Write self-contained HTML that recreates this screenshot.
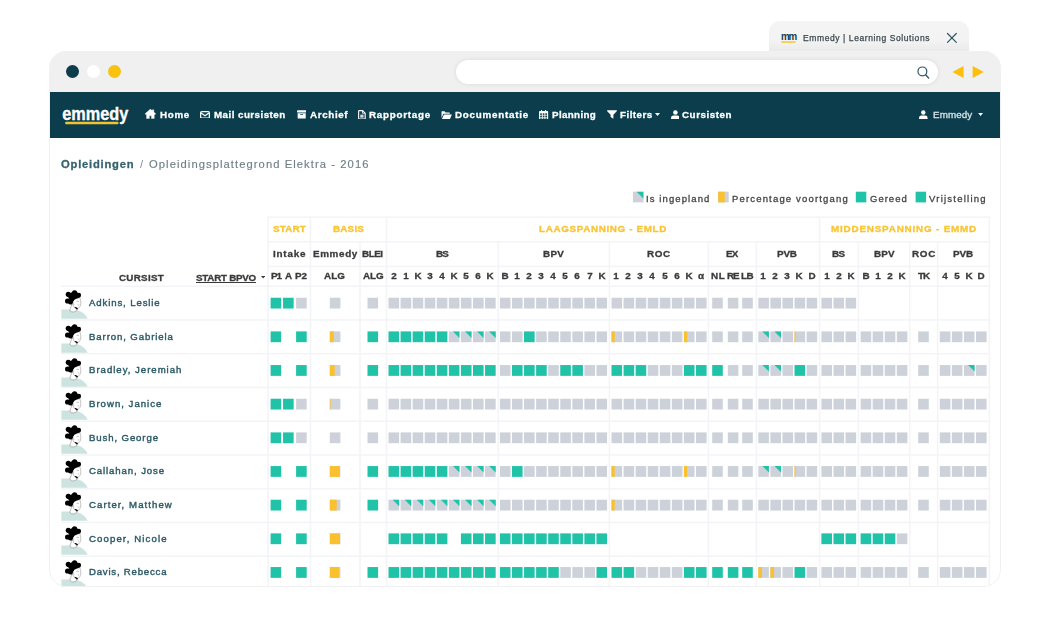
<!DOCTYPE html>
<html><head><meta charset="utf-8"><title>Emmedy | Learning Solutions</title>
<style>
html,body{margin:0;padding:0;background:#fff;}
body{width:1050px;height:638px;position:relative;overflow:hidden;font-family:'Liberation Sans', sans-serif;}
.a{position:absolute;}
.t{will-change:transform;position:absolute;white-space:pre;line-height:20px;height:20px;}
.c{position:absolute;width:10.8px;height:10.8px;background:#cdd2da;}
.G{background:#20c2a8;}
.P{background:linear-gradient(to bottom left,#20c2a8 31.3%,#cdd2da 31.8%);}
.vl{position:absolute;width:2px;background:#f3f4f7;}
.hl{position:absolute;height:2px;background:#f3f4f7;}

</style></head><body>
<div class="a" style="left:769px;top:20.7px;width:200px;height:32px;background:linear-gradient(#f4f4f4 0%,#f3f3f3 62%,#e9e9e9 97%);border-radius:11px 11px 0 0"></div>
<svg class="a" style="left:780px;top:31px" width="18" height="14" viewBox="0 0 18 14"><text x="1" y="9.2" font-family="Liberation Sans, sans-serif" font-weight="700" font-size="10" letter-spacing="-1.2" fill="#173f4c" textLength="15" lengthAdjust="spacingAndGlyphs">mm</text><rect x="1.4" y="10.3" width="14.2" height="1.5" fill="#f6c62c"/></svg>
<svg class="a" style="left:946px;top:32px" width="12" height="12" viewBox="0 0 12 12"><path d="M1.5 1.5 L10.3 10.3 M10.3 1.5 L1.5 10.3" stroke="#2f5461" stroke-width="1.2" stroke-linecap="round"/></svg>
<span class="t" style="left:803.3px;top:28.15px;font-size:8.5px;font-weight:400;color:#3a474d;letter-spacing:0.600px;-webkit-text-stroke:0.25px currentColor;">Emmedy | Learning Solutions</span>
<div class="a" id="frame" style="left:49.0px;top:51.0px;width:951.9px;height:535.5px;background:#fff;border-radius:17px 17px 17px 17px;overflow:hidden">
<div class="a" id="page" style="left:-49.0px;top:-51.0px;width:1050px;height:638px">
<div class="a" style="left:0;top:0;width:1050px;height:93.7px;background:#f0f0f0"></div>
<div class="a" style="left:0;top:91.7px;width:1050px;height:46.7px;background:#0b3d4c"></div>
<div class="a" style="left:66.1px;top:65.3px;width:13px;height:13px;border-radius:50%;background:#0b3d4c"></div>
<div class="a" style="left:86.8px;top:65.3px;width:13px;height:13px;border-radius:50%;background:#ffffff"></div>
<div class="a" style="left:107.5px;top:65.3px;width:13px;height:13px;border-radius:50%;background:#f9c20f"></div>
<div class="a" style="left:456px;top:59.8px;width:482px;height:24px;border-radius:12px;background:#fff;box-shadow:0 0 4px rgba(0,0,0,.10)"></div>
<svg class="a" style="left:915px;top:64px" width="16" height="16" viewBox="0 0 16 16"><circle cx="7.4" cy="7.4" r="4.4" fill="none" stroke="#2f5461" stroke-width="1.2"/><path d="M10.6 10.8 L13.6 14" stroke="#2f5461" stroke-width="1.3" stroke-linecap="round"/></svg>
<svg class="a" style="left:950px;top:64px" width="40" height="16" viewBox="0 0 40 16"><path d="M2.4 8 L13.6 2 L13.6 14 Z" fill="#fbbf0c"/><path d="M33.8 8 L22.6 2 L22.6 14 Z" fill="#fbbf0c"/></svg>
<svg class="a" style="left:60px;top:100px" width="72" height="28" viewBox="0 0 72 28"><text x="2.3" y="20" font-family="Liberation Sans, sans-serif" font-weight="700" font-size="18.5" fill="#fff" stroke="#fff" stroke-width=".35" textLength="66" lengthAdjust="spacingAndGlyphs">emmedy</text><rect x="5.1" y="21.7" width="53.4" height="2.6" rx="1" fill="#f3c22f"/></svg>
<svg class="a" style="left:145.4px;top:109.4px" width="10.8" height="9.7" viewBox="0 0 20 18"><path d="M10 0.2 L0 9 L1.6 10.8 L2.8 9.8 V17.8 H8.2 V12.4 H11.8 V17.8 H17.2 V9.8 L18.4 10.8 L20 9 L16.4 5.8 V1.4 H13.6 V3.4 Z" fill="#ffffff" stroke="#ffffff" stroke-width=".6" stroke-linejoin="round"/></svg>
<svg class="a" style="left:200.4px;top:110.5px" width="10.0" height="7.8" viewBox="0 0 20 15.6"><rect x="1.3" y="1.3" width="17.4" height="13" rx="2.4" fill="none" stroke="#ffffff" stroke-width="2.5"/><path d="M2.4 4 L10 9.6 L17.6 4" fill="none" stroke="#ffffff" stroke-width="2.3"/></svg>
<svg class="a" style="left:296.8px;top:110.2px" width="9.4" height="8.8" viewBox="0 0 20 18"><rect x="0" y="0" width="20" height="5" rx="1" fill="#ffffff"/><path d="M1.4 6.4 H18.6 V17 Q18.6 18 17.6 18 H2.4 Q1.4 18 1.4 17 Z M7 8.6 V10.4 H13 V8.6 Z" fill="#ffffff" fill-rule="evenodd"/></svg>
<svg class="a" style="left:358.0px;top:109.8px" width="7.8" height="9.6" viewBox="0 0 16 20"><path d="M2.4 1.2 H9.4 L14.8 6.6 V17.6 Q14.8 18.8 13.6 18.8 H2.4 Q1.2 18.8 1.2 17.6 V2.4 Q1.2 1.2 2.4 1.2 Z" fill="none" stroke="#ffffff" stroke-width="2.3"/><path d="M9.2 1.4 V6.8 H14.6" fill="none" stroke="#ffffff" stroke-width="1.6"/><rect x="4.6" y="9.6" width="6.8" height="6.4" fill="#ffffff" opacity=".8"/></svg>
<svg class="a" style="left:440.6px;top:110.6px" width="11.2" height="8.8" viewBox="0 0 22 17"><path d="M1.5 0.5 H7 L9 2.6 H16 Q17.4 2.6 17.4 4 V5.4 H5.6 Q4.6 5.4 4.2 6.4 L1 13.6 V1 Z" fill="#ffffff"/><path d="M5.8 6.8 H21.4 L17.6 15.6 Q17.2 16.5 16.2 16.5 H1.4 Z" fill="#ffffff"/></svg>
<svg class="a" style="left:539.4px;top:109.8px" width="9.2" height="9.6" viewBox="0 0 18 19"><path d="M4 0 H6 V2 H12 V0 H14 V2 H16.4 Q18 2 18 3.6 V17.4 Q18 19 16.4 19 H1.6 Q0 19 0 17.4 V3.6 Q0 2 1.6 2 H4 Z" fill="#ffffff"/><g fill="#0b3d4c"><rect x="2.2" y="6.6" width="3.4" height="3"/><rect x="7.3" y="6.6" width="3.4" height="3"/><rect x="12.4" y="6.6" width="3.4" height="3"/><rect x="2.2" y="11" width="3.4" height="3"/><rect x="7.3" y="11" width="3.4" height="3"/><rect x="12.4" y="11" width="3.4" height="3"/><rect x="2.2" y="15.2" width="3.4" height="2"/><rect x="7.3" y="15.2" width="3.4" height="2"/><rect x="12.4" y="15.2" width="3.4" height="2"/></g></svg>
<svg class="a" style="left:606.6px;top:110px" width="10" height="8.9" viewBox="0 0 20 18"><path d="M0.6 0.5 H19.4 Q20.4 1.2 19.6 2.4 L12.8 9.6 V17.6 L7.2 14.4 V9.6 L0.4 2.4 Q-0.4 1.2 0.6 0.5 Z" fill="#ffffff"/></svg>
<svg class="a" style="left:654.8px;top:113.4px" width="5" height="3" viewBox="0 0 10 6"><path d="M0 0 H10 L5 6 Z" fill="#ffffff"/></svg>
<svg class="a" style="left:670.6px;top:109.8px" width="8.8" height="9.4" viewBox="0 0 18 19"><circle cx="9" cy="5" r="4.6" fill="#ffffff"/><path d="M0 19 V16.4 Q0 11.4 5 11.4 H13 Q18 11.4 18 16.4 V19 Z" fill="#ffffff"/></svg>
<svg class="a" style="left:919.4px;top:109.8px" width="8.6" height="9.2" viewBox="0 0 18 19"><circle cx="9" cy="5" r="4.6" fill="#ffffff"/><path d="M0 19 V16.4 Q0 11.4 5 11.4 H13 Q18 11.4 18 16.4 V19 Z" fill="#ffffff"/></svg>
<svg class="a" style="left:978.2px;top:113.4px" width="5.2" height="3" viewBox="0 0 10 6"><path d="M0 0 H10 L5 6 Z" fill="#ffffff"/></svg>
<svg class="a" style="left:260.6px;top:276.4px" width="4.2" height="2.6" viewBox="0 0 10 6"><path d="M0 0 H10 L5 6 Z" fill="#3a3a3a"/></svg>
<svg class="a" style="left:0;top:0" width="1050" height="638" viewBox="0 0 1050 638"><rect x="267.35" y="216.35" width="722.80" height="1.50" fill="#f3f4f7"/><rect x="267.35" y="241.05" width="722.80" height="1.50" fill="#f3f4f7"/><rect x="267.35" y="265.65" width="722.80" height="1.50" fill="#f3f4f7"/><rect x="61.00" y="285.45" width="929.15" height="1.50" fill="#f3f4f7"/><rect x="61.00" y="319.20" width="929.15" height="1.50" fill="#f3f4f7"/><rect x="61.00" y="352.95" width="929.15" height="1.50" fill="#f3f4f7"/><rect x="61.00" y="386.70" width="929.15" height="1.50" fill="#f3f4f7"/><rect x="61.00" y="420.45" width="929.15" height="1.50" fill="#f3f4f7"/><rect x="61.00" y="454.20" width="929.15" height="1.50" fill="#f3f4f7"/><rect x="61.00" y="487.95" width="929.15" height="1.50" fill="#f3f4f7"/><rect x="61.00" y="521.70" width="929.15" height="1.50" fill="#f3f4f7"/><rect x="61.00" y="555.45" width="929.15" height="1.50" fill="#f3f4f7"/><rect x="267.35" y="217.10" width="1.50" height="369.40" fill="#f3f4f7"/><rect x="309.75" y="217.10" width="1.50" height="369.40" fill="#f3f4f7"/><rect x="359.25" y="241.80" width="1.50" height="344.70" fill="#f3f4f7"/><rect x="385.75" y="217.10" width="1.50" height="369.40" fill="#f3f4f7"/><rect x="497.45" y="241.80" width="1.50" height="344.70" fill="#f3f4f7"/><rect x="608.65" y="241.80" width="1.50" height="344.70" fill="#f3f4f7"/><rect x="707.65" y="241.80" width="1.50" height="344.70" fill="#f3f4f7"/><rect x="755.65" y="241.80" width="1.50" height="344.70" fill="#f3f4f7"/><rect x="818.85" y="217.10" width="1.50" height="369.40" fill="#f3f4f7"/><rect x="857.65" y="241.80" width="1.50" height="344.70" fill="#f3f4f7"/><rect x="908.95" y="241.80" width="1.50" height="344.70" fill="#f3f4f7"/><rect x="936.85" y="241.80" width="1.50" height="344.70" fill="#f3f4f7"/><rect x="988.65" y="217.10" width="1.50" height="369.40" fill="#f3f4f7"/></svg>
<span class="t" style="left:160.0px;top:104.90px;font-size:9.8px;font-weight:700;color:#ffffff;letter-spacing:0.689px;-webkit-text-stroke:0.3px currentColor;">Home</span>
<span class="t" style="left:213.8px;top:104.90px;font-size:9.8px;font-weight:700;color:#ffffff;letter-spacing:0.450px;-webkit-text-stroke:0.3px currentColor;">Mail cursisten</span>
<span class="t" style="left:309.7px;top:104.90px;font-size:9.8px;font-weight:700;color:#ffffff;letter-spacing:0.639px;-webkit-text-stroke:0.3px currentColor;">Archief</span>
<span class="t" style="left:368.6px;top:104.90px;font-size:9.8px;font-weight:700;color:#ffffff;letter-spacing:0.751px;-webkit-text-stroke:0.3px currentColor;">Rapportage</span>
<span class="t" style="left:455.2px;top:104.90px;font-size:9.8px;font-weight:700;color:#ffffff;letter-spacing:0.756px;-webkit-text-stroke:0.3px currentColor;">Documentatie</span>
<span class="t" style="left:551.8px;top:104.90px;font-size:9.8px;font-weight:700;color:#ffffff;letter-spacing:0.346px;-webkit-text-stroke:0.3px currentColor;">Planning</span>
<span class="t" style="left:619.6px;top:104.90px;font-size:9.8px;font-weight:700;color:#ffffff;letter-spacing:0.466px;-webkit-text-stroke:0.3px currentColor;">Filters</span>
<span class="t" style="left:682.2px;top:104.90px;font-size:9.8px;font-weight:700;color:#ffffff;letter-spacing:0.539px;-webkit-text-stroke:0.3px currentColor;">Cursisten</span>
<span class="t" style="left:932.6px;top:104.90px;font-size:9.8px;font-weight:400;color:#d5e2e6;letter-spacing:0.109px;-webkit-text-stroke:0.3px currentColor;">Emmedy</span>
<span class="t" style="left:60.6px;top:154.42px;font-size:11.2px;font-weight:700;color:#34626e;letter-spacing:0.796px;-webkit-text-stroke:0.3px currentColor;">Opleidingen</span>
<span class="t" style="left:139.5px;top:154.42px;font-size:11.2px;font-weight:400;color:#7b8a90;letter-spacing:0.000px;">/</span>
<span class="t" style="left:149.0px;top:154.42px;font-size:11.2px;font-weight:400;color:#6f7f86;letter-spacing:1.080px;-webkit-text-stroke:0.15px currentColor;">Opleidingsplattegrond Elektra - 2016</span>
<span class="t" style="left:646.2px;top:189.01px;font-size:9.5px;font-weight:400;color:#444444;letter-spacing:1.097px;-webkit-text-stroke:0.3px currentColor;">Is ingepland</span>
<span class="t" style="left:731.9px;top:189.01px;font-size:9.5px;font-weight:400;color:#444444;letter-spacing:1.169px;-webkit-text-stroke:0.3px currentColor;">Percentage voortgang</span>
<span class="t" style="left:869.9px;top:189.01px;font-size:9.5px;font-weight:400;color:#444444;letter-spacing:1.003px;-webkit-text-stroke:0.3px currentColor;">Gereed</span>
<span class="t" style="left:929.0px;top:189.01px;font-size:9.5px;font-weight:400;color:#444444;letter-spacing:1.241px;-webkit-text-stroke:0.3px currentColor;">Vrijstelling</span>
<span class="t" style="left:272.5px;top:219.37px;font-size:9.9px;font-weight:700;color:#f7c433;letter-spacing:0.128px;-webkit-text-stroke:0.3px currentColor;">START</span>
<span class="t" style="left:332.6px;top:219.37px;font-size:9.9px;font-weight:700;color:#f7c433;letter-spacing:0.178px;-webkit-text-stroke:0.3px currentColor;">BASIS</span>
<span class="t" style="left:539.0px;top:219.37px;font-size:9.9px;font-weight:700;color:#f7c433;letter-spacing:0.621px;-webkit-text-stroke:0.3px currentColor;">LAAGSPANNING - EMLD</span>
<span class="t" style="left:831.4px;top:219.37px;font-size:9.9px;font-weight:700;color:#f7c433;letter-spacing:0.795px;-webkit-text-stroke:0.3px currentColor;">MIDDENSPANNING - EMMD</span>
<span class="t" style="left:272.9px;top:244.07px;font-size:9.9px;font-weight:700;color:#3a3a3a;letter-spacing:0.771px;-webkit-text-stroke:0.3px currentColor;">Intake</span>
<span class="t" style="left:312.7px;top:244.07px;font-size:9.9px;font-weight:700;color:#3a3a3a;letter-spacing:0.626px;-webkit-text-stroke:0.3px currentColor;">Emmedy</span>
<span class="t" style="left:362.3px;top:244.07px;font-size:9.9px;font-weight:700;color:#3a3a3a;letter-spacing:-0.500px;-webkit-text-stroke:0.3px currentColor;">BLEI</span>
<span class="t" style="left:435.8px;top:244.07px;font-size:9.9px;font-weight:700;color:#3a3a3a;letter-spacing:-0.819px;-webkit-text-stroke:0.3px currentColor;">BS</span>
<span class="t" style="left:542.7px;top:244.07px;font-size:9.9px;font-weight:700;color:#3a3a3a;letter-spacing:0.244px;-webkit-text-stroke:0.3px currentColor;">BPV</span>
<span class="t" style="left:646.8px;top:244.07px;font-size:9.9px;font-weight:700;color:#3a3a3a;letter-spacing:0.623px;-webkit-text-stroke:0.3px currentColor;">ROC</span>
<span class="t" style="left:725.6px;top:244.07px;font-size:9.9px;font-weight:700;color:#3a3a3a;letter-spacing:-0.788px;-webkit-text-stroke:0.3px currentColor;">EX</span>
<span class="t" style="left:777.4px;top:244.07px;font-size:9.9px;font-weight:700;color:#3a3a3a;letter-spacing:-0.156px;-webkit-text-stroke:0.3px currentColor;">PVB</span>
<span class="t" style="left:832.3px;top:244.07px;font-size:9.9px;font-weight:700;color:#3a3a3a;letter-spacing:-0.719px;-webkit-text-stroke:0.3px currentColor;">BS</span>
<span class="t" style="left:873.6px;top:244.07px;font-size:9.9px;font-weight:700;color:#3a3a3a;letter-spacing:0.194px;-webkit-text-stroke:0.3px currentColor;">BPV</span>
<span class="t" style="left:912.0px;top:244.07px;font-size:9.9px;font-weight:700;color:#3a3a3a;letter-spacing:0.673px;-webkit-text-stroke:0.3px currentColor;">ROC</span>
<span class="t" style="left:953.3px;top:244.07px;font-size:9.9px;font-weight:700;color:#3a3a3a;letter-spacing:-0.106px;-webkit-text-stroke:0.3px currentColor;">PVB</span>
<span class="t" style="left:118.9px;top:268.00px;font-size:9.8px;font-weight:700;color:#3a3a3a;letter-spacing:0.297px;-webkit-text-stroke:0.3px currentColor;">CURSIST</span>
<span class="t" style="left:196.4px;top:268.00px;font-size:9.8px;font-weight:700;color:#3a3a3a;letter-spacing:-0.247px;text-decoration:underline;text-underline-offset:1px;-webkit-text-stroke:0.3px currentColor;">START BPVO</span>
<span class="t" style="left:270.7px;top:266.17px;font-size:9.9px;font-weight:700;color:#3a3a3a;letter-spacing:-1.094px;-webkit-text-stroke:0.3px currentColor;">P1</span>
<span class="t" style="left:284.6px;top:266.17px;font-size:9.9px;font-weight:700;color:#3a3a3a;letter-spacing:0.000px;-webkit-text-stroke:0.3px currentColor;">A</span>
<span class="t" style="left:295.4px;top:266.17px;font-size:9.9px;font-weight:700;color:#3a3a3a;letter-spacing:-0.194px;-webkit-text-stroke:0.3px currentColor;">P2</span>
<span class="t" style="left:324.3px;top:266.17px;font-size:9.9px;font-weight:700;color:#3a3a3a;letter-spacing:0.070px;-webkit-text-stroke:0.3px currentColor;">ALG</span>
<span class="t" style="left:362.6px;top:266.17px;font-size:9.9px;font-weight:700;color:#3a3a3a;letter-spacing:-0.130px;-webkit-text-stroke:0.3px currentColor;">ALG</span>
<span class="t" style="left:710.8px;top:266.17px;font-size:9.9px;font-weight:700;color:#3a3a3a;letter-spacing:0.628px;-webkit-text-stroke:0.3px currentColor;">NL</span>
<span class="t" style="left:727.2px;top:266.17px;font-size:9.9px;font-weight:700;color:#3a3a3a;letter-spacing:-1.119px;-webkit-text-stroke:0.3px currentColor;">RE</span>
<span class="t" style="left:741.4px;top:266.17px;font-size:9.9px;font-weight:700;color:#3a3a3a;letter-spacing:-0.572px;-webkit-text-stroke:0.3px currentColor;">LB</span>
<span class="t" style="left:917.6px;top:266.17px;font-size:9.9px;font-weight:700;color:#3a3a3a;letter-spacing:-1.072px;-webkit-text-stroke:0.3px currentColor;">TK</span>
<span class="t" style="left:88.9px;top:293.07px;font-size:9.6px;font-weight:400;color:#2b5a67;letter-spacing:0.884px;-webkit-text-stroke:0.4px currentColor;">Adkins, Leslie</span>
<span class="t" style="left:88.9px;top:326.73px;font-size:9.6px;font-weight:400;color:#2b5a67;letter-spacing:0.901px;-webkit-text-stroke:0.4px currentColor;">Barron, Gabriela</span>
<span class="t" style="left:88.9px;top:360.39px;font-size:9.6px;font-weight:400;color:#2b5a67;letter-spacing:0.987px;-webkit-text-stroke:0.4px currentColor;">Bradley, Jeremiah</span>
<span class="t" style="left:88.9px;top:394.05px;font-size:9.6px;font-weight:400;color:#2b5a67;letter-spacing:1.011px;-webkit-text-stroke:0.4px currentColor;">Brown, Janice</span>
<span class="t" style="left:88.9px;top:427.71px;font-size:9.6px;font-weight:400;color:#2b5a67;letter-spacing:0.891px;-webkit-text-stroke:0.4px currentColor;">Bush, George</span>
<span class="t" style="left:88.9px;top:461.37px;font-size:9.6px;font-weight:400;color:#2b5a67;letter-spacing:0.895px;-webkit-text-stroke:0.4px currentColor;">Callahan, Jose</span>
<span class="t" style="left:88.9px;top:495.03px;font-size:9.6px;font-weight:400;color:#2b5a67;letter-spacing:1.077px;-webkit-text-stroke:0.4px currentColor;">Carter, Matthew</span>
<span class="t" style="left:88.9px;top:528.69px;font-size:9.6px;font-weight:400;color:#2b5a67;letter-spacing:1.120px;-webkit-text-stroke:0.4px currentColor;">Cooper, Nicole</span>
<span class="t" style="left:88.9px;top:562.35px;font-size:9.6px;font-weight:400;color:#2b5a67;letter-spacing:0.793px;-webkit-text-stroke:0.4px currentColor;">Davis, Rebecca</span>
<span class="t" style="left:383.8px;top:266.17px;width:20px;text-align:center;font-size:9.9px;font-weight:700;-webkit-text-stroke:0.3px currentColor;color:#3a3a3a">2</span>
<span class="t" style="left:395.9px;top:266.17px;width:20px;text-align:center;font-size:9.9px;font-weight:700;-webkit-text-stroke:0.3px currentColor;color:#3a3a3a">1</span>
<span class="t" style="left:407.9px;top:266.17px;width:20px;text-align:center;font-size:9.9px;font-weight:700;-webkit-text-stroke:0.3px currentColor;color:#3a3a3a">K</span>
<span class="t" style="left:420.0px;top:266.17px;width:20px;text-align:center;font-size:9.9px;font-weight:700;-webkit-text-stroke:0.3px currentColor;color:#3a3a3a">3</span>
<span class="t" style="left:432.1px;top:266.17px;width:20px;text-align:center;font-size:9.9px;font-weight:700;-webkit-text-stroke:0.3px currentColor;color:#3a3a3a">4</span>
<span class="t" style="left:444.2px;top:266.17px;width:20px;text-align:center;font-size:9.9px;font-weight:700;-webkit-text-stroke:0.3px currentColor;color:#3a3a3a">K</span>
<span class="t" style="left:456.2px;top:266.17px;width:20px;text-align:center;font-size:9.9px;font-weight:700;-webkit-text-stroke:0.3px currentColor;color:#3a3a3a">5</span>
<span class="t" style="left:468.3px;top:266.17px;width:20px;text-align:center;font-size:9.9px;font-weight:700;-webkit-text-stroke:0.3px currentColor;color:#3a3a3a">6</span>
<span class="t" style="left:480.4px;top:266.17px;width:20px;text-align:center;font-size:9.9px;font-weight:700;-webkit-text-stroke:0.3px currentColor;color:#3a3a3a">K</span>
<span class="t" style="left:495.0px;top:266.17px;width:20px;text-align:center;font-size:9.9px;font-weight:700;-webkit-text-stroke:0.3px currentColor;color:#3a3a3a">B</span>
<span class="t" style="left:507.1px;top:266.17px;width:20px;text-align:center;font-size:9.9px;font-weight:700;-webkit-text-stroke:0.3px currentColor;color:#3a3a3a">1</span>
<span class="t" style="left:519.1px;top:266.17px;width:20px;text-align:center;font-size:9.9px;font-weight:700;-webkit-text-stroke:0.3px currentColor;color:#3a3a3a">2</span>
<span class="t" style="left:531.2px;top:266.17px;width:20px;text-align:center;font-size:9.9px;font-weight:700;-webkit-text-stroke:0.3px currentColor;color:#3a3a3a">3</span>
<span class="t" style="left:543.3px;top:266.17px;width:20px;text-align:center;font-size:9.9px;font-weight:700;-webkit-text-stroke:0.3px currentColor;color:#3a3a3a">4</span>
<span class="t" style="left:555.4px;top:266.17px;width:20px;text-align:center;font-size:9.9px;font-weight:700;-webkit-text-stroke:0.3px currentColor;color:#3a3a3a">5</span>
<span class="t" style="left:567.4px;top:266.17px;width:20px;text-align:center;font-size:9.9px;font-weight:700;-webkit-text-stroke:0.3px currentColor;color:#3a3a3a">6</span>
<span class="t" style="left:579.5px;top:266.17px;width:20px;text-align:center;font-size:9.9px;font-weight:700;-webkit-text-stroke:0.3px currentColor;color:#3a3a3a">7</span>
<span class="t" style="left:591.6px;top:266.17px;width:20px;text-align:center;font-size:9.9px;font-weight:700;-webkit-text-stroke:0.3px currentColor;color:#3a3a3a">K</span>
<span class="t" style="left:606.2px;top:266.17px;width:20px;text-align:center;font-size:9.9px;font-weight:700;-webkit-text-stroke:0.3px currentColor;color:#3a3a3a">1</span>
<span class="t" style="left:618.3px;top:266.17px;width:20px;text-align:center;font-size:9.9px;font-weight:700;-webkit-text-stroke:0.3px currentColor;color:#3a3a3a">2</span>
<span class="t" style="left:630.3px;top:266.17px;width:20px;text-align:center;font-size:9.9px;font-weight:700;-webkit-text-stroke:0.3px currentColor;color:#3a3a3a">3</span>
<span class="t" style="left:642.4px;top:266.17px;width:20px;text-align:center;font-size:9.9px;font-weight:700;-webkit-text-stroke:0.3px currentColor;color:#3a3a3a">4</span>
<span class="t" style="left:654.5px;top:266.17px;width:20px;text-align:center;font-size:9.9px;font-weight:700;-webkit-text-stroke:0.3px currentColor;color:#3a3a3a">5</span>
<span class="t" style="left:666.6px;top:266.17px;width:20px;text-align:center;font-size:9.9px;font-weight:700;-webkit-text-stroke:0.3px currentColor;color:#3a3a3a">6</span>
<span class="t" style="left:678.6px;top:266.17px;width:20px;text-align:center;font-size:9.9px;font-weight:700;-webkit-text-stroke:0.3px currentColor;color:#3a3a3a">K</span>
<span class="t" style="left:690.7px;top:266.17px;width:20px;text-align:center;font-size:9.9px;font-weight:700;-webkit-text-stroke:0.3px currentColor;color:#3a3a3a">α</span>
<span class="t" style="left:753.2px;top:266.17px;width:20px;text-align:center;font-size:9.9px;font-weight:700;-webkit-text-stroke:0.3px currentColor;color:#3a3a3a">1</span>
<span class="t" style="left:765.3px;top:266.17px;width:20px;text-align:center;font-size:9.9px;font-weight:700;-webkit-text-stroke:0.3px currentColor;color:#3a3a3a">2</span>
<span class="t" style="left:777.3px;top:266.17px;width:20px;text-align:center;font-size:9.9px;font-weight:700;-webkit-text-stroke:0.3px currentColor;color:#3a3a3a">3</span>
<span class="t" style="left:789.4px;top:266.17px;width:20px;text-align:center;font-size:9.9px;font-weight:700;-webkit-text-stroke:0.3px currentColor;color:#3a3a3a">K</span>
<span class="t" style="left:801.5px;top:266.17px;width:20px;text-align:center;font-size:9.9px;font-weight:700;-webkit-text-stroke:0.3px currentColor;color:#3a3a3a">D</span>
<span class="t" style="left:816.5px;top:266.17px;width:20px;text-align:center;font-size:9.9px;font-weight:700;-webkit-text-stroke:0.3px currentColor;color:#3a3a3a">1</span>
<span class="t" style="left:828.6px;top:266.17px;width:20px;text-align:center;font-size:9.9px;font-weight:700;-webkit-text-stroke:0.3px currentColor;color:#3a3a3a">2</span>
<span class="t" style="left:840.6px;top:266.17px;width:20px;text-align:center;font-size:9.9px;font-weight:700;-webkit-text-stroke:0.3px currentColor;color:#3a3a3a">K</span>
<span class="t" style="left:855.9px;top:266.17px;width:20px;text-align:center;font-size:9.9px;font-weight:700;-webkit-text-stroke:0.3px currentColor;color:#3a3a3a">B</span>
<span class="t" style="left:868.0px;top:266.17px;width:20px;text-align:center;font-size:9.9px;font-weight:700;-webkit-text-stroke:0.3px currentColor;color:#3a3a3a">1</span>
<span class="t" style="left:880.0px;top:266.17px;width:20px;text-align:center;font-size:9.9px;font-weight:700;-webkit-text-stroke:0.3px currentColor;color:#3a3a3a">2</span>
<span class="t" style="left:892.1px;top:266.17px;width:20px;text-align:center;font-size:9.9px;font-weight:700;-webkit-text-stroke:0.3px currentColor;color:#3a3a3a">K</span>
<span class="t" style="left:935.1px;top:266.17px;width:20px;text-align:center;font-size:9.9px;font-weight:700;-webkit-text-stroke:0.3px currentColor;color:#3a3a3a">4</span>
<span class="t" style="left:947.2px;top:266.17px;width:20px;text-align:center;font-size:9.9px;font-weight:700;-webkit-text-stroke:0.3px currentColor;color:#3a3a3a">5</span>
<span class="t" style="left:959.2px;top:266.17px;width:20px;text-align:center;font-size:9.9px;font-weight:700;-webkit-text-stroke:0.3px currentColor;color:#3a3a3a">K</span>
<span class="t" style="left:971.3px;top:266.17px;width:20px;text-align:center;font-size:9.9px;font-weight:700;-webkit-text-stroke:0.3px currentColor;color:#3a3a3a">D</span>
<svg class="a" style="left:61px;top:290.30px" width="28" height="30" viewBox="0 0 28 30"><path d="M0.4 19.4 H10 L17 20.6 Q23 22 26.7 28.7 H0.4 Z" fill="#cde3df"/><path d="M11.2 13.6 L9 19.4 Q8.6 21.2 10.6 21.8 Q13 22.4 15.4 21 L17 17.6 Z" fill="#fff" stroke="#444" stroke-width=".35"/><path d="M13 9.4 L18.8 7.6 Q20.2 11.4 19.8 14 Q19.4 16.6 17.4 18.2 Q15.2 18.8 13.2 17.2 Q11 14.6 11.4 11.6 Z" fill="#fff" stroke="#555" stroke-width=".35"/><path d="M13.4 17.2 L16 19.8 L17 18.6 L15 17 Z" fill="#111"/><path d="M15.6 11.6 q1.1 -.7 2.2 0 M16.8 14.8 q.7 .4 1.4 0 M12.6 12.4 q-.9 1.2 .3 2.4" stroke="#555" stroke-width=".4" fill="none"/><g fill="#000"><circle cx="7.3" cy="4.3" r="2.6"/><circle cx="13.6" cy="2.9" r="2.6"/><circle cx="17.9" cy="4.9" r="2.1"/><circle cx="6.6" cy="11" r="2.6"/><circle cx="9.4" cy="12.3" r="2.2"/><path d="M5.4 5.6 L8.4 8.6 L5 9.6 L8 13.6 L10.6 14.6 L12 12 L13.6 9.6 L16.4 8.2 L19.4 7.2 L19.8 5 L16.4 2.6 L13 1 L9.4 3 Z"/></g></svg>
<svg class="a" style="left:61px;top:323.95px" width="28" height="30" viewBox="0 0 28 30"><path d="M0.4 19.4 H10 L17 20.6 Q23 22 26.7 28.7 H0.4 Z" fill="#cde3df"/><path d="M11.2 13.6 L9 19.4 Q8.6 21.2 10.6 21.8 Q13 22.4 15.4 21 L17 17.6 Z" fill="#fff" stroke="#444" stroke-width=".35"/><path d="M13 9.4 L18.8 7.6 Q20.2 11.4 19.8 14 Q19.4 16.6 17.4 18.2 Q15.2 18.8 13.2 17.2 Q11 14.6 11.4 11.6 Z" fill="#fff" stroke="#555" stroke-width=".35"/><path d="M13.4 17.2 L16 19.8 L17 18.6 L15 17 Z" fill="#111"/><path d="M15.6 11.6 q1.1 -.7 2.2 0 M16.8 14.8 q.7 .4 1.4 0 M12.6 12.4 q-.9 1.2 .3 2.4" stroke="#555" stroke-width=".4" fill="none"/><g fill="#000"><circle cx="7.3" cy="4.3" r="2.6"/><circle cx="13.6" cy="2.9" r="2.6"/><circle cx="17.9" cy="4.9" r="2.1"/><circle cx="6.6" cy="11" r="2.6"/><circle cx="9.4" cy="12.3" r="2.2"/><path d="M5.4 5.6 L8.4 8.6 L5 9.6 L8 13.6 L10.6 14.6 L12 12 L13.6 9.6 L16.4 8.2 L19.4 7.2 L19.8 5 L16.4 2.6 L13 1 L9.4 3 Z"/></g></svg>
<svg class="a" style="left:61px;top:357.60px" width="28" height="30" viewBox="0 0 28 30"><path d="M0.4 19.4 H10 L17 20.6 Q23 22 26.7 28.7 H0.4 Z" fill="#cde3df"/><path d="M11.2 13.6 L9 19.4 Q8.6 21.2 10.6 21.8 Q13 22.4 15.4 21 L17 17.6 Z" fill="#fff" stroke="#444" stroke-width=".35"/><path d="M13 9.4 L18.8 7.6 Q20.2 11.4 19.8 14 Q19.4 16.6 17.4 18.2 Q15.2 18.8 13.2 17.2 Q11 14.6 11.4 11.6 Z" fill="#fff" stroke="#555" stroke-width=".35"/><path d="M13.4 17.2 L16 19.8 L17 18.6 L15 17 Z" fill="#111"/><path d="M15.6 11.6 q1.1 -.7 2.2 0 M16.8 14.8 q.7 .4 1.4 0 M12.6 12.4 q-.9 1.2 .3 2.4" stroke="#555" stroke-width=".4" fill="none"/><g fill="#000"><circle cx="7.3" cy="4.3" r="2.6"/><circle cx="13.6" cy="2.9" r="2.6"/><circle cx="17.9" cy="4.9" r="2.1"/><circle cx="6.6" cy="11" r="2.6"/><circle cx="9.4" cy="12.3" r="2.2"/><path d="M5.4 5.6 L8.4 8.6 L5 9.6 L8 13.6 L10.6 14.6 L12 12 L13.6 9.6 L16.4 8.2 L19.4 7.2 L19.8 5 L16.4 2.6 L13 1 L9.4 3 Z"/></g></svg>
<svg class="a" style="left:61px;top:391.25px" width="28" height="30" viewBox="0 0 28 30"><path d="M0.4 19.4 H10 L17 20.6 Q23 22 26.7 28.7 H0.4 Z" fill="#cde3df"/><path d="M11.2 13.6 L9 19.4 Q8.6 21.2 10.6 21.8 Q13 22.4 15.4 21 L17 17.6 Z" fill="#fff" stroke="#444" stroke-width=".35"/><path d="M13 9.4 L18.8 7.6 Q20.2 11.4 19.8 14 Q19.4 16.6 17.4 18.2 Q15.2 18.8 13.2 17.2 Q11 14.6 11.4 11.6 Z" fill="#fff" stroke="#555" stroke-width=".35"/><path d="M13.4 17.2 L16 19.8 L17 18.6 L15 17 Z" fill="#111"/><path d="M15.6 11.6 q1.1 -.7 2.2 0 M16.8 14.8 q.7 .4 1.4 0 M12.6 12.4 q-.9 1.2 .3 2.4" stroke="#555" stroke-width=".4" fill="none"/><g fill="#000"><circle cx="7.3" cy="4.3" r="2.6"/><circle cx="13.6" cy="2.9" r="2.6"/><circle cx="17.9" cy="4.9" r="2.1"/><circle cx="6.6" cy="11" r="2.6"/><circle cx="9.4" cy="12.3" r="2.2"/><path d="M5.4 5.6 L8.4 8.6 L5 9.6 L8 13.6 L10.6 14.6 L12 12 L13.6 9.6 L16.4 8.2 L19.4 7.2 L19.8 5 L16.4 2.6 L13 1 L9.4 3 Z"/></g></svg>
<svg class="a" style="left:61px;top:424.90px" width="28" height="30" viewBox="0 0 28 30"><path d="M0.4 19.4 H10 L17 20.6 Q23 22 26.7 28.7 H0.4 Z" fill="#cde3df"/><path d="M11.2 13.6 L9 19.4 Q8.6 21.2 10.6 21.8 Q13 22.4 15.4 21 L17 17.6 Z" fill="#fff" stroke="#444" stroke-width=".35"/><path d="M13 9.4 L18.8 7.6 Q20.2 11.4 19.8 14 Q19.4 16.6 17.4 18.2 Q15.2 18.8 13.2 17.2 Q11 14.6 11.4 11.6 Z" fill="#fff" stroke="#555" stroke-width=".35"/><path d="M13.4 17.2 L16 19.8 L17 18.6 L15 17 Z" fill="#111"/><path d="M15.6 11.6 q1.1 -.7 2.2 0 M16.8 14.8 q.7 .4 1.4 0 M12.6 12.4 q-.9 1.2 .3 2.4" stroke="#555" stroke-width=".4" fill="none"/><g fill="#000"><circle cx="7.3" cy="4.3" r="2.6"/><circle cx="13.6" cy="2.9" r="2.6"/><circle cx="17.9" cy="4.9" r="2.1"/><circle cx="6.6" cy="11" r="2.6"/><circle cx="9.4" cy="12.3" r="2.2"/><path d="M5.4 5.6 L8.4 8.6 L5 9.6 L8 13.6 L10.6 14.6 L12 12 L13.6 9.6 L16.4 8.2 L19.4 7.2 L19.8 5 L16.4 2.6 L13 1 L9.4 3 Z"/></g></svg>
<svg class="a" style="left:61px;top:458.55px" width="28" height="30" viewBox="0 0 28 30"><path d="M0.4 19.4 H10 L17 20.6 Q23 22 26.7 28.7 H0.4 Z" fill="#cde3df"/><path d="M11.2 13.6 L9 19.4 Q8.6 21.2 10.6 21.8 Q13 22.4 15.4 21 L17 17.6 Z" fill="#fff" stroke="#444" stroke-width=".35"/><path d="M13 9.4 L18.8 7.6 Q20.2 11.4 19.8 14 Q19.4 16.6 17.4 18.2 Q15.2 18.8 13.2 17.2 Q11 14.6 11.4 11.6 Z" fill="#fff" stroke="#555" stroke-width=".35"/><path d="M13.4 17.2 L16 19.8 L17 18.6 L15 17 Z" fill="#111"/><path d="M15.6 11.6 q1.1 -.7 2.2 0 M16.8 14.8 q.7 .4 1.4 0 M12.6 12.4 q-.9 1.2 .3 2.4" stroke="#555" stroke-width=".4" fill="none"/><g fill="#000"><circle cx="7.3" cy="4.3" r="2.6"/><circle cx="13.6" cy="2.9" r="2.6"/><circle cx="17.9" cy="4.9" r="2.1"/><circle cx="6.6" cy="11" r="2.6"/><circle cx="9.4" cy="12.3" r="2.2"/><path d="M5.4 5.6 L8.4 8.6 L5 9.6 L8 13.6 L10.6 14.6 L12 12 L13.6 9.6 L16.4 8.2 L19.4 7.2 L19.8 5 L16.4 2.6 L13 1 L9.4 3 Z"/></g></svg>
<svg class="a" style="left:61px;top:492.20px" width="28" height="30" viewBox="0 0 28 30"><path d="M0.4 19.4 H10 L17 20.6 Q23 22 26.7 28.7 H0.4 Z" fill="#cde3df"/><path d="M11.2 13.6 L9 19.4 Q8.6 21.2 10.6 21.8 Q13 22.4 15.4 21 L17 17.6 Z" fill="#fff" stroke="#444" stroke-width=".35"/><path d="M13 9.4 L18.8 7.6 Q20.2 11.4 19.8 14 Q19.4 16.6 17.4 18.2 Q15.2 18.8 13.2 17.2 Q11 14.6 11.4 11.6 Z" fill="#fff" stroke="#555" stroke-width=".35"/><path d="M13.4 17.2 L16 19.8 L17 18.6 L15 17 Z" fill="#111"/><path d="M15.6 11.6 q1.1 -.7 2.2 0 M16.8 14.8 q.7 .4 1.4 0 M12.6 12.4 q-.9 1.2 .3 2.4" stroke="#555" stroke-width=".4" fill="none"/><g fill="#000"><circle cx="7.3" cy="4.3" r="2.6"/><circle cx="13.6" cy="2.9" r="2.6"/><circle cx="17.9" cy="4.9" r="2.1"/><circle cx="6.6" cy="11" r="2.6"/><circle cx="9.4" cy="12.3" r="2.2"/><path d="M5.4 5.6 L8.4 8.6 L5 9.6 L8 13.6 L10.6 14.6 L12 12 L13.6 9.6 L16.4 8.2 L19.4 7.2 L19.8 5 L16.4 2.6 L13 1 L9.4 3 Z"/></g></svg>
<svg class="a" style="left:61px;top:525.85px" width="28" height="30" viewBox="0 0 28 30"><path d="M0.4 19.4 H10 L17 20.6 Q23 22 26.7 28.7 H0.4 Z" fill="#cde3df"/><path d="M11.2 13.6 L9 19.4 Q8.6 21.2 10.6 21.8 Q13 22.4 15.4 21 L17 17.6 Z" fill="#fff" stroke="#444" stroke-width=".35"/><path d="M13 9.4 L18.8 7.6 Q20.2 11.4 19.8 14 Q19.4 16.6 17.4 18.2 Q15.2 18.8 13.2 17.2 Q11 14.6 11.4 11.6 Z" fill="#fff" stroke="#555" stroke-width=".35"/><path d="M13.4 17.2 L16 19.8 L17 18.6 L15 17 Z" fill="#111"/><path d="M15.6 11.6 q1.1 -.7 2.2 0 M16.8 14.8 q.7 .4 1.4 0 M12.6 12.4 q-.9 1.2 .3 2.4" stroke="#555" stroke-width=".4" fill="none"/><g fill="#000"><circle cx="7.3" cy="4.3" r="2.6"/><circle cx="13.6" cy="2.9" r="2.6"/><circle cx="17.9" cy="4.9" r="2.1"/><circle cx="6.6" cy="11" r="2.6"/><circle cx="9.4" cy="12.3" r="2.2"/><path d="M5.4 5.6 L8.4 8.6 L5 9.6 L8 13.6 L10.6 14.6 L12 12 L13.6 9.6 L16.4 8.2 L19.4 7.2 L19.8 5 L16.4 2.6 L13 1 L9.4 3 Z"/></g></svg>
<svg class="a" style="left:61px;top:559.50px" width="28" height="30" viewBox="0 0 28 30"><path d="M0.4 19.4 H10 L17 20.6 Q23 22 26.7 28.7 H0.4 Z" fill="#cde3df"/><path d="M11.2 13.6 L9 19.4 Q8.6 21.2 10.6 21.8 Q13 22.4 15.4 21 L17 17.6 Z" fill="#fff" stroke="#444" stroke-width=".35"/><path d="M13 9.4 L18.8 7.6 Q20.2 11.4 19.8 14 Q19.4 16.6 17.4 18.2 Q15.2 18.8 13.2 17.2 Q11 14.6 11.4 11.6 Z" fill="#fff" stroke="#555" stroke-width=".35"/><path d="M13.4 17.2 L16 19.8 L17 18.6 L15 17 Z" fill="#111"/><path d="M15.6 11.6 q1.1 -.7 2.2 0 M16.8 14.8 q.7 .4 1.4 0 M12.6 12.4 q-.9 1.2 .3 2.4" stroke="#555" stroke-width=".4" fill="none"/><g fill="#000"><circle cx="7.3" cy="4.3" r="2.6"/><circle cx="13.6" cy="2.9" r="2.6"/><circle cx="17.9" cy="4.9" r="2.1"/><circle cx="6.6" cy="11" r="2.6"/><circle cx="9.4" cy="12.3" r="2.2"/><path d="M5.4 5.6 L8.4 8.6 L5 9.6 L8 13.6 L10.6 14.6 L12 12 L13.6 9.6 L16.4 8.2 L19.4 7.2 L19.8 5 L16.4 2.6 L13 1 L9.4 3 Z"/></g></svg>
<svg class="a" style="left:0;top:0" width="1050" height="638" viewBox="0 0 1050 638"><rect x="270.60" y="297.73" width="10.60" height="10.80" fill="#20c2a8"/><rect x="283.05" y="297.73" width="10.60" height="10.80" fill="#20c2a8"/><rect x="296.10" y="297.73" width="10.60" height="10.80" fill="#cdd2da"/><rect x="329.80" y="297.73" width="10.60" height="10.80" fill="#cdd2da"/><rect x="367.50" y="297.73" width="10.60" height="10.80" fill="#cdd2da"/><rect x="388.50" y="297.73" width="10.60" height="10.80" fill="#cdd2da"/><rect x="400.57" y="297.73" width="10.60" height="10.80" fill="#cdd2da"/><rect x="412.64" y="297.73" width="10.60" height="10.80" fill="#cdd2da"/><rect x="424.71" y="297.73" width="10.60" height="10.80" fill="#cdd2da"/><rect x="436.78" y="297.73" width="10.60" height="10.80" fill="#cdd2da"/><rect x="448.85" y="297.73" width="10.60" height="10.80" fill="#cdd2da"/><rect x="460.92" y="297.73" width="10.60" height="10.80" fill="#cdd2da"/><rect x="472.99" y="297.73" width="10.60" height="10.80" fill="#cdd2da"/><rect x="485.06" y="297.73" width="10.60" height="10.80" fill="#cdd2da"/><rect x="499.90" y="297.73" width="10.60" height="10.80" fill="#cdd2da"/><rect x="511.97" y="297.73" width="10.60" height="10.80" fill="#cdd2da"/><rect x="524.04" y="297.73" width="10.60" height="10.80" fill="#cdd2da"/><rect x="536.11" y="297.73" width="10.60" height="10.80" fill="#cdd2da"/><rect x="548.18" y="297.73" width="10.60" height="10.80" fill="#cdd2da"/><rect x="560.25" y="297.73" width="10.60" height="10.80" fill="#cdd2da"/><rect x="572.32" y="297.73" width="10.60" height="10.80" fill="#cdd2da"/><rect x="584.39" y="297.73" width="10.60" height="10.80" fill="#cdd2da"/><rect x="596.46" y="297.73" width="10.60" height="10.80" fill="#cdd2da"/><rect x="611.50" y="297.73" width="10.60" height="10.80" fill="#cdd2da"/><rect x="623.57" y="297.73" width="10.60" height="10.80" fill="#cdd2da"/><rect x="635.64" y="297.73" width="10.60" height="10.80" fill="#cdd2da"/><rect x="647.71" y="297.73" width="10.60" height="10.80" fill="#cdd2da"/><rect x="659.78" y="297.73" width="10.60" height="10.80" fill="#cdd2da"/><rect x="671.85" y="297.73" width="10.60" height="10.80" fill="#cdd2da"/><rect x="683.92" y="297.73" width="10.60" height="10.80" fill="#cdd2da"/><rect x="695.99" y="297.73" width="10.60" height="10.80" fill="#cdd2da"/><rect x="712.20" y="297.73" width="10.60" height="10.80" fill="#cdd2da"/><rect x="727.80" y="297.73" width="10.60" height="10.80" fill="#cdd2da"/><rect x="742.20" y="297.73" width="10.60" height="10.80" fill="#cdd2da"/><rect x="758.30" y="297.73" width="10.60" height="10.80" fill="#cdd2da"/><rect x="770.37" y="297.73" width="10.60" height="10.80" fill="#cdd2da"/><rect x="782.44" y="297.73" width="10.60" height="10.80" fill="#cdd2da"/><rect x="794.51" y="297.73" width="10.60" height="10.80" fill="#cdd2da"/><rect x="806.58" y="297.73" width="10.60" height="10.80" fill="#cdd2da"/><rect x="821.40" y="297.73" width="10.60" height="10.80" fill="#cdd2da"/><rect x="833.47" y="297.73" width="10.60" height="10.80" fill="#cdd2da"/><rect x="845.54" y="297.73" width="10.60" height="10.80" fill="#cdd2da"/><rect x="270.60" y="331.40" width="10.60" height="10.80" fill="#20c2a8"/><rect x="296.10" y="331.40" width="10.60" height="10.80" fill="#20c2a8"/><rect x="329.80" y="331.40" width="10.60" height="10.80" fill="#cdd2da"/><rect x="329.80" y="331.40" width="4.03" height="10.80" fill="#fbc02d"/><rect x="367.50" y="331.40" width="10.60" height="10.80" fill="#20c2a8"/><rect x="388.50" y="331.40" width="10.60" height="10.80" fill="#20c2a8"/><rect x="400.57" y="331.40" width="10.60" height="10.80" fill="#20c2a8"/><rect x="412.64" y="331.40" width="10.60" height="10.80" fill="#20c2a8"/><rect x="424.71" y="331.40" width="10.60" height="10.80" fill="#20c2a8"/><rect x="436.78" y="331.40" width="10.60" height="10.80" fill="#20c2a8"/><rect x="448.85" y="331.40" width="10.60" height="10.80" fill="#cdd2da"/><path d="M452.95 331.40 H459.45 V337.90 Z" fill="#20c2a8"/><rect x="460.92" y="331.40" width="10.60" height="10.80" fill="#cdd2da"/><path d="M465.02 331.40 H471.52 V337.90 Z" fill="#20c2a8"/><rect x="472.99" y="331.40" width="10.60" height="10.80" fill="#cdd2da"/><path d="M477.09 331.40 H483.59 V337.90 Z" fill="#20c2a8"/><rect x="485.06" y="331.40" width="10.60" height="10.80" fill="#cdd2da"/><path d="M489.16 331.40 H495.66 V337.90 Z" fill="#20c2a8"/><rect x="499.90" y="331.40" width="10.60" height="10.80" fill="#cdd2da"/><rect x="511.97" y="331.40" width="10.60" height="10.80" fill="#cdd2da"/><rect x="524.04" y="331.40" width="10.60" height="10.80" fill="#20c2a8"/><rect x="536.11" y="331.40" width="10.60" height="10.80" fill="#cdd2da"/><rect x="548.18" y="331.40" width="10.60" height="10.80" fill="#cdd2da"/><rect x="560.25" y="331.40" width="10.60" height="10.80" fill="#cdd2da"/><rect x="572.32" y="331.40" width="10.60" height="10.80" fill="#cdd2da"/><rect x="584.39" y="331.40" width="10.60" height="10.80" fill="#cdd2da"/><rect x="596.46" y="331.40" width="10.60" height="10.80" fill="#cdd2da"/><rect x="611.50" y="331.40" width="10.60" height="10.80" fill="#cdd2da"/><rect x="611.50" y="331.40" width="3.18" height="10.80" fill="#fbc02d"/><rect x="623.57" y="331.40" width="10.60" height="10.80" fill="#cdd2da"/><rect x="635.64" y="331.40" width="10.60" height="10.80" fill="#cdd2da"/><rect x="647.71" y="331.40" width="10.60" height="10.80" fill="#cdd2da"/><rect x="659.78" y="331.40" width="10.60" height="10.80" fill="#cdd2da"/><rect x="671.85" y="331.40" width="10.60" height="10.80" fill="#cdd2da"/><rect x="683.92" y="331.40" width="10.60" height="10.80" fill="#cdd2da"/><rect x="683.92" y="331.40" width="3.18" height="10.80" fill="#fbc02d"/><rect x="695.99" y="331.40" width="10.60" height="10.80" fill="#cdd2da"/><rect x="712.20" y="331.40" width="10.60" height="10.80" fill="#cdd2da"/><rect x="727.80" y="331.40" width="10.60" height="10.80" fill="#cdd2da"/><rect x="742.20" y="331.40" width="10.60" height="10.80" fill="#cdd2da"/><rect x="758.30" y="331.40" width="10.60" height="10.80" fill="#cdd2da"/><path d="M762.40 331.40 H768.90 V337.90 Z" fill="#20c2a8"/><rect x="770.37" y="331.40" width="10.60" height="10.80" fill="#cdd2da"/><path d="M774.47 331.40 H780.97 V337.90 Z" fill="#20c2a8"/><rect x="782.44" y="331.40" width="10.60" height="10.80" fill="#cdd2da"/><rect x="794.51" y="331.40" width="10.60" height="10.80" fill="#cdd2da"/><rect x="794.51" y="331.40" width="1.06" height="10.80" fill="#fbc02d"/><rect x="806.58" y="331.40" width="10.60" height="10.80" fill="#cdd2da"/><rect x="821.40" y="331.40" width="10.60" height="10.80" fill="#cdd2da"/><rect x="833.47" y="331.40" width="10.60" height="10.80" fill="#cdd2da"/><rect x="845.54" y="331.40" width="10.60" height="10.80" fill="#cdd2da"/><rect x="860.60" y="331.40" width="10.60" height="10.80" fill="#cdd2da"/><rect x="872.67" y="331.40" width="10.60" height="10.80" fill="#cdd2da"/><rect x="884.74" y="331.40" width="10.60" height="10.80" fill="#cdd2da"/><rect x="896.81" y="331.40" width="10.60" height="10.80" fill="#cdd2da"/><rect x="918.20" y="331.40" width="10.60" height="10.80" fill="#cdd2da"/><rect x="939.80" y="331.40" width="10.60" height="10.80" fill="#cdd2da"/><rect x="951.87" y="331.40" width="10.60" height="10.80" fill="#cdd2da"/><rect x="963.94" y="331.40" width="10.60" height="10.80" fill="#cdd2da"/><rect x="976.01" y="331.40" width="10.60" height="10.80" fill="#cdd2da"/><rect x="270.60" y="365.06" width="10.60" height="10.80" fill="#20c2a8"/><rect x="296.10" y="365.06" width="10.60" height="10.80" fill="#20c2a8"/><rect x="329.80" y="365.06" width="10.60" height="10.80" fill="#cdd2da"/><rect x="329.80" y="365.06" width="4.88" height="10.80" fill="#fbc02d"/><rect x="367.50" y="365.06" width="10.60" height="10.80" fill="#20c2a8"/><rect x="388.50" y="365.06" width="10.60" height="10.80" fill="#20c2a8"/><rect x="400.57" y="365.06" width="10.60" height="10.80" fill="#20c2a8"/><rect x="412.64" y="365.06" width="10.60" height="10.80" fill="#20c2a8"/><rect x="424.71" y="365.06" width="10.60" height="10.80" fill="#20c2a8"/><rect x="436.78" y="365.06" width="10.60" height="10.80" fill="#20c2a8"/><rect x="448.85" y="365.06" width="10.60" height="10.80" fill="#20c2a8"/><rect x="460.92" y="365.06" width="10.60" height="10.80" fill="#20c2a8"/><rect x="472.99" y="365.06" width="10.60" height="10.80" fill="#20c2a8"/><rect x="485.06" y="365.06" width="10.60" height="10.80" fill="#20c2a8"/><rect x="499.90" y="365.06" width="10.60" height="10.80" fill="#cdd2da"/><rect x="511.97" y="365.06" width="10.60" height="10.80" fill="#20c2a8"/><rect x="524.04" y="365.06" width="10.60" height="10.80" fill="#20c2a8"/><rect x="536.11" y="365.06" width="10.60" height="10.80" fill="#20c2a8"/><rect x="548.18" y="365.06" width="10.60" height="10.80" fill="#cdd2da"/><rect x="560.25" y="365.06" width="10.60" height="10.80" fill="#20c2a8"/><rect x="572.32" y="365.06" width="10.60" height="10.80" fill="#20c2a8"/><rect x="584.39" y="365.06" width="10.60" height="10.80" fill="#cdd2da"/><rect x="596.46" y="365.06" width="10.60" height="10.80" fill="#cdd2da"/><rect x="611.50" y="365.06" width="10.60" height="10.80" fill="#20c2a8"/><rect x="623.57" y="365.06" width="10.60" height="10.80" fill="#20c2a8"/><rect x="635.64" y="365.06" width="10.60" height="10.80" fill="#20c2a8"/><rect x="647.71" y="365.06" width="10.60" height="10.80" fill="#cdd2da"/><rect x="659.78" y="365.06" width="10.60" height="10.80" fill="#cdd2da"/><rect x="671.85" y="365.06" width="10.60" height="10.80" fill="#cdd2da"/><rect x="683.92" y="365.06" width="10.60" height="10.80" fill="#20c2a8"/><rect x="695.99" y="365.06" width="10.60" height="10.80" fill="#20c2a8"/><rect x="712.20" y="365.06" width="10.60" height="10.80" fill="#20c2a8"/><rect x="727.80" y="365.06" width="10.60" height="10.80" fill="#cdd2da"/><rect x="742.20" y="365.06" width="10.60" height="10.80" fill="#cdd2da"/><rect x="758.30" y="365.06" width="10.60" height="10.80" fill="#cdd2da"/><path d="M762.40 365.06 H768.90 V371.56 Z" fill="#20c2a8"/><rect x="770.37" y="365.06" width="10.60" height="10.80" fill="#cdd2da"/><path d="M774.47 365.06 H780.97 V371.56 Z" fill="#20c2a8"/><rect x="782.44" y="365.06" width="10.60" height="10.80" fill="#cdd2da"/><rect x="794.51" y="365.06" width="10.60" height="10.80" fill="#20c2a8"/><rect x="806.58" y="365.06" width="10.60" height="10.80" fill="#cdd2da"/><rect x="821.40" y="365.06" width="10.60" height="10.80" fill="#cdd2da"/><rect x="833.47" y="365.06" width="10.60" height="10.80" fill="#cdd2da"/><rect x="845.54" y="365.06" width="10.60" height="10.80" fill="#cdd2da"/><rect x="860.60" y="365.06" width="10.60" height="10.80" fill="#cdd2da"/><rect x="872.67" y="365.06" width="10.60" height="10.80" fill="#cdd2da"/><rect x="884.74" y="365.06" width="10.60" height="10.80" fill="#cdd2da"/><rect x="896.81" y="365.06" width="10.60" height="10.80" fill="#cdd2da"/><rect x="918.20" y="365.06" width="10.60" height="10.80" fill="#cdd2da"/><rect x="939.80" y="365.06" width="10.60" height="10.80" fill="#cdd2da"/><rect x="951.87" y="365.06" width="10.60" height="10.80" fill="#cdd2da"/><rect x="963.94" y="365.06" width="10.60" height="10.80" fill="#cdd2da"/><path d="M968.04 365.06 H974.54 V371.56 Z" fill="#20c2a8"/><rect x="976.01" y="365.06" width="10.60" height="10.80" fill="#cdd2da"/><rect x="270.60" y="398.73" width="10.60" height="10.80" fill="#20c2a8"/><rect x="283.05" y="398.73" width="10.60" height="10.80" fill="#20c2a8"/><rect x="296.10" y="398.73" width="10.60" height="10.80" fill="#cdd2da"/><rect x="329.80" y="398.73" width="10.60" height="10.80" fill="#cdd2da"/><rect x="329.80" y="398.73" width="0.74" height="10.80" fill="#fbc02d"/><rect x="367.50" y="398.73" width="10.60" height="10.80" fill="#cdd2da"/><rect x="388.50" y="398.73" width="10.60" height="10.80" fill="#cdd2da"/><rect x="400.57" y="398.73" width="10.60" height="10.80" fill="#cdd2da"/><rect x="412.64" y="398.73" width="10.60" height="10.80" fill="#cdd2da"/><rect x="424.71" y="398.73" width="10.60" height="10.80" fill="#cdd2da"/><rect x="436.78" y="398.73" width="10.60" height="10.80" fill="#cdd2da"/><rect x="448.85" y="398.73" width="10.60" height="10.80" fill="#cdd2da"/><rect x="460.92" y="398.73" width="10.60" height="10.80" fill="#cdd2da"/><rect x="472.99" y="398.73" width="10.60" height="10.80" fill="#cdd2da"/><rect x="485.06" y="398.73" width="10.60" height="10.80" fill="#cdd2da"/><rect x="499.90" y="398.73" width="10.60" height="10.80" fill="#cdd2da"/><rect x="511.97" y="398.73" width="10.60" height="10.80" fill="#cdd2da"/><rect x="524.04" y="398.73" width="10.60" height="10.80" fill="#cdd2da"/><rect x="536.11" y="398.73" width="10.60" height="10.80" fill="#cdd2da"/><rect x="548.18" y="398.73" width="10.60" height="10.80" fill="#cdd2da"/><rect x="560.25" y="398.73" width="10.60" height="10.80" fill="#cdd2da"/><rect x="572.32" y="398.73" width="10.60" height="10.80" fill="#cdd2da"/><rect x="584.39" y="398.73" width="10.60" height="10.80" fill="#cdd2da"/><rect x="596.46" y="398.73" width="10.60" height="10.80" fill="#cdd2da"/><rect x="611.50" y="398.73" width="10.60" height="10.80" fill="#cdd2da"/><rect x="623.57" y="398.73" width="10.60" height="10.80" fill="#cdd2da"/><rect x="635.64" y="398.73" width="10.60" height="10.80" fill="#cdd2da"/><rect x="647.71" y="398.73" width="10.60" height="10.80" fill="#cdd2da"/><rect x="659.78" y="398.73" width="10.60" height="10.80" fill="#cdd2da"/><rect x="671.85" y="398.73" width="10.60" height="10.80" fill="#cdd2da"/><rect x="683.92" y="398.73" width="10.60" height="10.80" fill="#cdd2da"/><rect x="695.99" y="398.73" width="10.60" height="10.80" fill="#cdd2da"/><rect x="712.20" y="398.73" width="10.60" height="10.80" fill="#cdd2da"/><rect x="727.80" y="398.73" width="10.60" height="10.80" fill="#cdd2da"/><rect x="742.20" y="398.73" width="10.60" height="10.80" fill="#cdd2da"/><rect x="758.30" y="398.73" width="10.60" height="10.80" fill="#cdd2da"/><rect x="770.37" y="398.73" width="10.60" height="10.80" fill="#cdd2da"/><rect x="782.44" y="398.73" width="10.60" height="10.80" fill="#cdd2da"/><rect x="794.51" y="398.73" width="10.60" height="10.80" fill="#cdd2da"/><rect x="806.58" y="398.73" width="10.60" height="10.80" fill="#cdd2da"/><rect x="821.40" y="398.73" width="10.60" height="10.80" fill="#cdd2da"/><rect x="833.47" y="398.73" width="10.60" height="10.80" fill="#cdd2da"/><rect x="845.54" y="398.73" width="10.60" height="10.80" fill="#cdd2da"/><rect x="860.60" y="398.73" width="10.60" height="10.80" fill="#cdd2da"/><rect x="872.67" y="398.73" width="10.60" height="10.80" fill="#cdd2da"/><rect x="884.74" y="398.73" width="10.60" height="10.80" fill="#cdd2da"/><rect x="896.81" y="398.73" width="10.60" height="10.80" fill="#cdd2da"/><rect x="918.20" y="398.73" width="10.60" height="10.80" fill="#cdd2da"/><rect x="939.80" y="398.73" width="10.60" height="10.80" fill="#cdd2da"/><rect x="951.87" y="398.73" width="10.60" height="10.80" fill="#cdd2da"/><rect x="963.94" y="398.73" width="10.60" height="10.80" fill="#cdd2da"/><rect x="976.01" y="398.73" width="10.60" height="10.80" fill="#cdd2da"/><rect x="270.60" y="432.39" width="10.60" height="10.80" fill="#20c2a8"/><rect x="283.05" y="432.39" width="10.60" height="10.80" fill="#20c2a8"/><rect x="296.10" y="432.39" width="10.60" height="10.80" fill="#cdd2da"/><rect x="329.80" y="432.39" width="10.60" height="10.80" fill="#cdd2da"/><rect x="367.50" y="432.39" width="10.60" height="10.80" fill="#cdd2da"/><rect x="388.50" y="432.39" width="10.60" height="10.80" fill="#cdd2da"/><rect x="400.57" y="432.39" width="10.60" height="10.80" fill="#cdd2da"/><rect x="412.64" y="432.39" width="10.60" height="10.80" fill="#cdd2da"/><rect x="424.71" y="432.39" width="10.60" height="10.80" fill="#cdd2da"/><rect x="436.78" y="432.39" width="10.60" height="10.80" fill="#cdd2da"/><rect x="448.85" y="432.39" width="10.60" height="10.80" fill="#cdd2da"/><rect x="460.92" y="432.39" width="10.60" height="10.80" fill="#cdd2da"/><rect x="472.99" y="432.39" width="10.60" height="10.80" fill="#cdd2da"/><rect x="485.06" y="432.39" width="10.60" height="10.80" fill="#cdd2da"/><rect x="499.90" y="432.39" width="10.60" height="10.80" fill="#cdd2da"/><rect x="511.97" y="432.39" width="10.60" height="10.80" fill="#cdd2da"/><rect x="524.04" y="432.39" width="10.60" height="10.80" fill="#cdd2da"/><rect x="536.11" y="432.39" width="10.60" height="10.80" fill="#cdd2da"/><rect x="548.18" y="432.39" width="10.60" height="10.80" fill="#cdd2da"/><rect x="560.25" y="432.39" width="10.60" height="10.80" fill="#cdd2da"/><rect x="572.32" y="432.39" width="10.60" height="10.80" fill="#cdd2da"/><rect x="584.39" y="432.39" width="10.60" height="10.80" fill="#cdd2da"/><rect x="596.46" y="432.39" width="10.60" height="10.80" fill="#cdd2da"/><rect x="611.50" y="432.39" width="10.60" height="10.80" fill="#cdd2da"/><rect x="623.57" y="432.39" width="10.60" height="10.80" fill="#cdd2da"/><rect x="635.64" y="432.39" width="10.60" height="10.80" fill="#cdd2da"/><rect x="647.71" y="432.39" width="10.60" height="10.80" fill="#cdd2da"/><rect x="659.78" y="432.39" width="10.60" height="10.80" fill="#cdd2da"/><rect x="671.85" y="432.39" width="10.60" height="10.80" fill="#cdd2da"/><rect x="683.92" y="432.39" width="10.60" height="10.80" fill="#cdd2da"/><rect x="695.99" y="432.39" width="10.60" height="10.80" fill="#cdd2da"/><rect x="712.20" y="432.39" width="10.60" height="10.80" fill="#cdd2da"/><rect x="727.80" y="432.39" width="10.60" height="10.80" fill="#cdd2da"/><rect x="742.20" y="432.39" width="10.60" height="10.80" fill="#cdd2da"/><rect x="758.30" y="432.39" width="10.60" height="10.80" fill="#cdd2da"/><rect x="770.37" y="432.39" width="10.60" height="10.80" fill="#cdd2da"/><rect x="782.44" y="432.39" width="10.60" height="10.80" fill="#cdd2da"/><rect x="794.51" y="432.39" width="10.60" height="10.80" fill="#cdd2da"/><rect x="806.58" y="432.39" width="10.60" height="10.80" fill="#cdd2da"/><rect x="821.40" y="432.39" width="10.60" height="10.80" fill="#cdd2da"/><rect x="833.47" y="432.39" width="10.60" height="10.80" fill="#cdd2da"/><rect x="845.54" y="432.39" width="10.60" height="10.80" fill="#cdd2da"/><rect x="860.60" y="432.39" width="10.60" height="10.80" fill="#cdd2da"/><rect x="872.67" y="432.39" width="10.60" height="10.80" fill="#cdd2da"/><rect x="884.74" y="432.39" width="10.60" height="10.80" fill="#cdd2da"/><rect x="896.81" y="432.39" width="10.60" height="10.80" fill="#cdd2da"/><rect x="918.20" y="432.39" width="10.60" height="10.80" fill="#cdd2da"/><rect x="939.80" y="432.39" width="10.60" height="10.80" fill="#cdd2da"/><rect x="951.87" y="432.39" width="10.60" height="10.80" fill="#cdd2da"/><rect x="963.94" y="432.39" width="10.60" height="10.80" fill="#cdd2da"/><rect x="976.01" y="432.39" width="10.60" height="10.80" fill="#cdd2da"/><rect x="270.60" y="466.06" width="10.60" height="10.80" fill="#20c2a8"/><rect x="296.10" y="466.06" width="10.60" height="10.80" fill="#20c2a8"/><rect x="329.80" y="466.06" width="10.60" height="10.80" fill="#cdd2da"/><rect x="329.80" y="466.06" width="10.07" height="10.80" fill="#fbc02d"/><rect x="367.50" y="466.06" width="10.60" height="10.80" fill="#20c2a8"/><rect x="388.50" y="466.06" width="10.60" height="10.80" fill="#20c2a8"/><rect x="400.57" y="466.06" width="10.60" height="10.80" fill="#20c2a8"/><rect x="412.64" y="466.06" width="10.60" height="10.80" fill="#20c2a8"/><rect x="424.71" y="466.06" width="10.60" height="10.80" fill="#20c2a8"/><rect x="436.78" y="466.06" width="10.60" height="10.80" fill="#20c2a8"/><rect x="448.85" y="466.06" width="10.60" height="10.80" fill="#cdd2da"/><path d="M452.95 466.06 H459.45 V472.56 Z" fill="#20c2a8"/><rect x="460.92" y="466.06" width="10.60" height="10.80" fill="#cdd2da"/><path d="M465.02 466.06 H471.52 V472.56 Z" fill="#20c2a8"/><rect x="472.99" y="466.06" width="10.60" height="10.80" fill="#cdd2da"/><path d="M477.09 466.06 H483.59 V472.56 Z" fill="#20c2a8"/><rect x="485.06" y="466.06" width="10.60" height="10.80" fill="#cdd2da"/><path d="M489.16 466.06 H495.66 V472.56 Z" fill="#20c2a8"/><rect x="499.90" y="466.06" width="10.60" height="10.80" fill="#cdd2da"/><rect x="511.97" y="466.06" width="10.60" height="10.80" fill="#20c2a8"/><rect x="524.04" y="466.06" width="10.60" height="10.80" fill="#cdd2da"/><rect x="536.11" y="466.06" width="10.60" height="10.80" fill="#cdd2da"/><rect x="548.18" y="466.06" width="10.60" height="10.80" fill="#cdd2da"/><rect x="560.25" y="466.06" width="10.60" height="10.80" fill="#cdd2da"/><rect x="572.32" y="466.06" width="10.60" height="10.80" fill="#cdd2da"/><rect x="584.39" y="466.06" width="10.60" height="10.80" fill="#cdd2da"/><rect x="596.46" y="466.06" width="10.60" height="10.80" fill="#cdd2da"/><rect x="611.50" y="466.06" width="10.60" height="10.80" fill="#cdd2da"/><rect x="611.50" y="466.06" width="3.18" height="10.80" fill="#fbc02d"/><rect x="623.57" y="466.06" width="10.60" height="10.80" fill="#cdd2da"/><rect x="635.64" y="466.06" width="10.60" height="10.80" fill="#cdd2da"/><rect x="647.71" y="466.06" width="10.60" height="10.80" fill="#cdd2da"/><rect x="659.78" y="466.06" width="10.60" height="10.80" fill="#cdd2da"/><rect x="671.85" y="466.06" width="10.60" height="10.80" fill="#cdd2da"/><rect x="683.92" y="466.06" width="10.60" height="10.80" fill="#cdd2da"/><rect x="683.92" y="466.06" width="3.18" height="10.80" fill="#fbc02d"/><rect x="695.99" y="466.06" width="10.60" height="10.80" fill="#cdd2da"/><rect x="712.20" y="466.06" width="10.60" height="10.80" fill="#cdd2da"/><rect x="727.80" y="466.06" width="10.60" height="10.80" fill="#cdd2da"/><rect x="742.20" y="466.06" width="10.60" height="10.80" fill="#cdd2da"/><rect x="758.30" y="466.06" width="10.60" height="10.80" fill="#cdd2da"/><path d="M762.40 466.06 H768.90 V472.56 Z" fill="#20c2a8"/><rect x="770.37" y="466.06" width="10.60" height="10.80" fill="#cdd2da"/><path d="M774.47 466.06 H780.97 V472.56 Z" fill="#20c2a8"/><rect x="782.44" y="466.06" width="10.60" height="10.80" fill="#cdd2da"/><rect x="794.51" y="466.06" width="10.60" height="10.80" fill="#cdd2da"/><rect x="794.51" y="466.06" width="1.06" height="10.80" fill="#fbc02d"/><rect x="806.58" y="466.06" width="10.60" height="10.80" fill="#cdd2da"/><rect x="821.40" y="466.06" width="10.60" height="10.80" fill="#cdd2da"/><rect x="833.47" y="466.06" width="10.60" height="10.80" fill="#cdd2da"/><rect x="845.54" y="466.06" width="10.60" height="10.80" fill="#cdd2da"/><rect x="860.60" y="466.06" width="10.60" height="10.80" fill="#cdd2da"/><rect x="872.67" y="466.06" width="10.60" height="10.80" fill="#cdd2da"/><rect x="884.74" y="466.06" width="10.60" height="10.80" fill="#cdd2da"/><rect x="896.81" y="466.06" width="10.60" height="10.80" fill="#cdd2da"/><rect x="918.20" y="466.06" width="10.60" height="10.80" fill="#cdd2da"/><rect x="939.80" y="466.06" width="10.60" height="10.80" fill="#cdd2da"/><rect x="951.87" y="466.06" width="10.60" height="10.80" fill="#cdd2da"/><rect x="963.94" y="466.06" width="10.60" height="10.80" fill="#cdd2da"/><rect x="976.01" y="466.06" width="10.60" height="10.80" fill="#cdd2da"/><rect x="270.60" y="499.72" width="10.60" height="10.80" fill="#20c2a8"/><rect x="296.10" y="499.72" width="10.60" height="10.80" fill="#20c2a8"/><rect x="329.80" y="499.72" width="10.60" height="10.80" fill="#cdd2da"/><rect x="329.80" y="499.72" width="6.89" height="10.80" fill="#fbc02d"/><rect x="367.50" y="499.72" width="10.60" height="10.80" fill="#20c2a8"/><rect x="388.50" y="499.72" width="10.60" height="10.80" fill="#cdd2da"/><path d="M392.60 499.72 H399.10 V506.22 Z" fill="#20c2a8"/><rect x="400.57" y="499.72" width="10.60" height="10.80" fill="#cdd2da"/><path d="M404.67 499.72 H411.17 V506.22 Z" fill="#20c2a8"/><rect x="412.64" y="499.72" width="10.60" height="10.80" fill="#cdd2da"/><path d="M416.74 499.72 H423.24 V506.22 Z" fill="#20c2a8"/><rect x="424.71" y="499.72" width="10.60" height="10.80" fill="#cdd2da"/><path d="M428.81 499.72 H435.31 V506.22 Z" fill="#20c2a8"/><rect x="436.78" y="499.72" width="10.60" height="10.80" fill="#cdd2da"/><path d="M440.88 499.72 H447.38 V506.22 Z" fill="#20c2a8"/><rect x="448.85" y="499.72" width="10.60" height="10.80" fill="#cdd2da"/><path d="M452.95 499.72 H459.45 V506.22 Z" fill="#20c2a8"/><rect x="460.92" y="499.72" width="10.60" height="10.80" fill="#cdd2da"/><path d="M465.02 499.72 H471.52 V506.22 Z" fill="#20c2a8"/><rect x="472.99" y="499.72" width="10.60" height="10.80" fill="#cdd2da"/><path d="M477.09 499.72 H483.59 V506.22 Z" fill="#20c2a8"/><rect x="485.06" y="499.72" width="10.60" height="10.80" fill="#cdd2da"/><path d="M489.16 499.72 H495.66 V506.22 Z" fill="#20c2a8"/><rect x="499.90" y="499.72" width="10.60" height="10.80" fill="#cdd2da"/><rect x="511.97" y="499.72" width="10.60" height="10.80" fill="#cdd2da"/><rect x="524.04" y="499.72" width="10.60" height="10.80" fill="#cdd2da"/><rect x="536.11" y="499.72" width="10.60" height="10.80" fill="#cdd2da"/><rect x="548.18" y="499.72" width="10.60" height="10.80" fill="#cdd2da"/><rect x="560.25" y="499.72" width="10.60" height="10.80" fill="#cdd2da"/><rect x="572.32" y="499.72" width="10.60" height="10.80" fill="#cdd2da"/><rect x="584.39" y="499.72" width="10.60" height="10.80" fill="#cdd2da"/><rect x="596.46" y="499.72" width="10.60" height="10.80" fill="#cdd2da"/><rect x="611.50" y="499.72" width="10.60" height="10.80" fill="#cdd2da"/><rect x="611.50" y="499.72" width="3.18" height="10.80" fill="#fbc02d"/><rect x="623.57" y="499.72" width="10.60" height="10.80" fill="#cdd2da"/><rect x="635.64" y="499.72" width="10.60" height="10.80" fill="#cdd2da"/><rect x="647.71" y="499.72" width="10.60" height="10.80" fill="#cdd2da"/><rect x="659.78" y="499.72" width="10.60" height="10.80" fill="#cdd2da"/><rect x="671.85" y="499.72" width="10.60" height="10.80" fill="#cdd2da"/><rect x="683.92" y="499.72" width="10.60" height="10.80" fill="#cdd2da"/><rect x="695.99" y="499.72" width="10.60" height="10.80" fill="#cdd2da"/><rect x="712.20" y="499.72" width="10.60" height="10.80" fill="#cdd2da"/><rect x="727.80" y="499.72" width="10.60" height="10.80" fill="#cdd2da"/><rect x="742.20" y="499.72" width="10.60" height="10.80" fill="#cdd2da"/><rect x="758.30" y="499.72" width="10.60" height="10.80" fill="#cdd2da"/><rect x="770.37" y="499.72" width="10.60" height="10.80" fill="#cdd2da"/><rect x="782.44" y="499.72" width="10.60" height="10.80" fill="#cdd2da"/><rect x="794.51" y="499.72" width="10.60" height="10.80" fill="#cdd2da"/><rect x="806.58" y="499.72" width="10.60" height="10.80" fill="#cdd2da"/><rect x="821.40" y="499.72" width="10.60" height="10.80" fill="#cdd2da"/><rect x="833.47" y="499.72" width="10.60" height="10.80" fill="#cdd2da"/><rect x="845.54" y="499.72" width="10.60" height="10.80" fill="#cdd2da"/><rect x="860.60" y="499.72" width="10.60" height="10.80" fill="#cdd2da"/><rect x="872.67" y="499.72" width="10.60" height="10.80" fill="#cdd2da"/><rect x="884.74" y="499.72" width="10.60" height="10.80" fill="#cdd2da"/><rect x="896.81" y="499.72" width="10.60" height="10.80" fill="#cdd2da"/><rect x="918.20" y="499.72" width="10.60" height="10.80" fill="#cdd2da"/><rect x="939.80" y="499.72" width="10.60" height="10.80" fill="#cdd2da"/><rect x="951.87" y="499.72" width="10.60" height="10.80" fill="#cdd2da"/><rect x="963.94" y="499.72" width="10.60" height="10.80" fill="#cdd2da"/><rect x="976.01" y="499.72" width="10.60" height="10.80" fill="#cdd2da"/><rect x="270.60" y="533.38" width="10.60" height="10.80" fill="#20c2a8"/><rect x="296.10" y="533.38" width="10.60" height="10.80" fill="#20c2a8"/><rect x="329.80" y="533.38" width="10.60" height="10.80" fill="#cdd2da"/><rect x="329.80" y="533.38" width="10.28" height="10.80" fill="#fbc02d"/><rect x="388.50" y="533.38" width="10.60" height="10.80" fill="#20c2a8"/><rect x="400.57" y="533.38" width="10.60" height="10.80" fill="#20c2a8"/><rect x="412.64" y="533.38" width="10.60" height="10.80" fill="#20c2a8"/><rect x="424.71" y="533.38" width="10.60" height="10.80" fill="#20c2a8"/><rect x="436.78" y="533.38" width="10.60" height="10.80" fill="#20c2a8"/><rect x="460.92" y="533.38" width="10.60" height="10.80" fill="#20c2a8"/><rect x="472.99" y="533.38" width="10.60" height="10.80" fill="#20c2a8"/><rect x="485.06" y="533.38" width="10.60" height="10.80" fill="#20c2a8"/><rect x="499.90" y="533.38" width="10.60" height="10.80" fill="#20c2a8"/><rect x="511.97" y="533.38" width="10.60" height="10.80" fill="#20c2a8"/><rect x="524.04" y="533.38" width="10.60" height="10.80" fill="#20c2a8"/><rect x="536.11" y="533.38" width="10.60" height="10.80" fill="#20c2a8"/><rect x="548.18" y="533.38" width="10.60" height="10.80" fill="#20c2a8"/><rect x="560.25" y="533.38" width="10.60" height="10.80" fill="#20c2a8"/><rect x="572.32" y="533.38" width="10.60" height="10.80" fill="#20c2a8"/><rect x="584.39" y="533.38" width="10.60" height="10.80" fill="#20c2a8"/><rect x="596.46" y="533.38" width="10.60" height="10.80" fill="#20c2a8"/><rect x="821.40" y="533.38" width="10.60" height="10.80" fill="#20c2a8"/><rect x="833.47" y="533.38" width="10.60" height="10.80" fill="#20c2a8"/><rect x="845.54" y="533.38" width="10.60" height="10.80" fill="#20c2a8"/><rect x="860.60" y="533.38" width="10.60" height="10.80" fill="#20c2a8"/><rect x="872.67" y="533.38" width="10.60" height="10.80" fill="#20c2a8"/><rect x="884.74" y="533.38" width="10.60" height="10.80" fill="#20c2a8"/><rect x="896.81" y="533.38" width="10.60" height="10.80" fill="#cdd2da"/><rect x="270.60" y="567.05" width="10.60" height="10.80" fill="#20c2a8"/><rect x="296.10" y="567.05" width="10.60" height="10.80" fill="#20c2a8"/><rect x="329.80" y="567.05" width="10.60" height="10.80" fill="#cdd2da"/><rect x="329.80" y="567.05" width="9.33" height="10.80" fill="#fbc02d"/><rect x="367.50" y="567.05" width="10.60" height="10.80" fill="#20c2a8"/><rect x="388.50" y="567.05" width="10.60" height="10.80" fill="#20c2a8"/><rect x="400.57" y="567.05" width="10.60" height="10.80" fill="#20c2a8"/><rect x="412.64" y="567.05" width="10.60" height="10.80" fill="#20c2a8"/><rect x="424.71" y="567.05" width="10.60" height="10.80" fill="#20c2a8"/><rect x="436.78" y="567.05" width="10.60" height="10.80" fill="#20c2a8"/><rect x="448.85" y="567.05" width="10.60" height="10.80" fill="#20c2a8"/><rect x="460.92" y="567.05" width="10.60" height="10.80" fill="#20c2a8"/><rect x="472.99" y="567.05" width="10.60" height="10.80" fill="#20c2a8"/><rect x="485.06" y="567.05" width="10.60" height="10.80" fill="#20c2a8"/><rect x="499.90" y="567.05" width="10.60" height="10.80" fill="#20c2a8"/><rect x="511.97" y="567.05" width="10.60" height="10.80" fill="#20c2a8"/><rect x="524.04" y="567.05" width="10.60" height="10.80" fill="#20c2a8"/><rect x="536.11" y="567.05" width="10.60" height="10.80" fill="#20c2a8"/><rect x="548.18" y="567.05" width="10.60" height="10.80" fill="#20c2a8"/><rect x="560.25" y="567.05" width="10.60" height="10.80" fill="#cdd2da"/><rect x="572.32" y="567.05" width="10.60" height="10.80" fill="#cdd2da"/><rect x="584.39" y="567.05" width="10.60" height="10.80" fill="#cdd2da"/><rect x="596.46" y="567.05" width="10.60" height="10.80" fill="#20c2a8"/><rect x="611.50" y="567.05" width="10.60" height="10.80" fill="#20c2a8"/><rect x="623.57" y="567.05" width="10.60" height="10.80" fill="#20c2a8"/><rect x="635.64" y="567.05" width="10.60" height="10.80" fill="#cdd2da"/><rect x="647.71" y="567.05" width="10.60" height="10.80" fill="#cdd2da"/><rect x="659.78" y="567.05" width="10.60" height="10.80" fill="#cdd2da"/><rect x="671.85" y="567.05" width="10.60" height="10.80" fill="#cdd2da"/><rect x="683.92" y="567.05" width="10.60" height="10.80" fill="#20c2a8"/><rect x="695.99" y="567.05" width="10.60" height="10.80" fill="#20c2a8"/><rect x="712.20" y="567.05" width="10.60" height="10.80" fill="#20c2a8"/><rect x="727.80" y="567.05" width="10.60" height="10.80" fill="#20c2a8"/><rect x="742.20" y="567.05" width="10.60" height="10.80" fill="#20c2a8"/><rect x="758.30" y="567.05" width="10.60" height="10.80" fill="#cdd2da"/><rect x="758.30" y="567.05" width="3.71" height="10.80" fill="#fbc02d"/><rect x="770.37" y="567.05" width="10.60" height="10.80" fill="#cdd2da"/><rect x="770.37" y="567.05" width="3.71" height="10.80" fill="#fbc02d"/><rect x="782.44" y="567.05" width="10.60" height="10.80" fill="#cdd2da"/><rect x="794.51" y="567.05" width="10.60" height="10.80" fill="#20c2a8"/><rect x="806.58" y="567.05" width="10.60" height="10.80" fill="#cdd2da"/><rect x="821.40" y="567.05" width="10.60" height="10.80" fill="#cdd2da"/><rect x="833.47" y="567.05" width="10.60" height="10.80" fill="#cdd2da"/><rect x="845.54" y="567.05" width="10.60" height="10.80" fill="#cdd2da"/><rect x="860.60" y="567.05" width="10.60" height="10.80" fill="#cdd2da"/><rect x="872.67" y="567.05" width="10.60" height="10.80" fill="#cdd2da"/><rect x="884.74" y="567.05" width="10.60" height="10.80" fill="#cdd2da"/><rect x="896.81" y="567.05" width="10.60" height="10.80" fill="#cdd2da"/><rect x="918.20" y="567.05" width="10.60" height="10.80" fill="#cdd2da"/><rect x="939.80" y="567.05" width="10.60" height="10.80" fill="#cdd2da"/><rect x="951.87" y="567.05" width="10.60" height="10.80" fill="#cdd2da"/><rect x="963.94" y="567.05" width="10.60" height="10.80" fill="#cdd2da"/><rect x="976.01" y="567.05" width="10.60" height="10.80" fill="#cdd2da"/><rect x="632.95" y="191.70" width="10.50" height="10.70" fill="#cdd2da"/><path d="M636.55 191.70 H643.45 V198.60 Z" fill="#20c2a8"/><rect x="718.20" y="191.70" width="10.50" height="10.70" fill="#cdd2da"/><rect x="718.20" y="191.70" width="6.51" height="10.70" fill="#fbc02d"/><rect x="855.80" y="191.70" width="10.50" height="10.70" fill="#20c2a8"/><rect x="915.60" y="191.70" width="10.50" height="10.70" fill="#20c2a8"/></svg>
</div></div>
<div class="a" style="left:48.5px;top:50.5px;width:952.9px;height:536.5px;box-sizing:border-box;border:1px solid #f1f1f1;border-radius:17.5px;pointer-events:none"></div>
</body></html>
